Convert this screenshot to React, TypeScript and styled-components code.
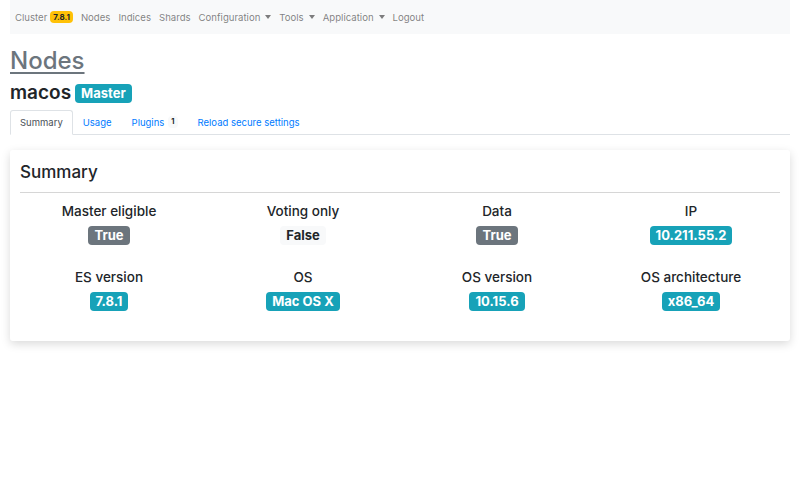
import React from 'react';
import styled, { createGlobalStyle } from 'styled-components';

const GlobalStyle = createGlobalStyle`
  body {
    margin: 0;
    background: #fff;
    font-family: Inter, "Noto Sans", "DejaVu Sans", sans-serif;
    color: #212529;
  }
  *, *::before, *::after {
    box-sizing: border-box;
  }
`;

const Page = styled.div`
  padding: 0 10px 40px;
`;

const Navbar = styled.nav`
  display: flex;
  align-items: center;
  height: 34px;
  padding: 0 1px;
  background: #f8f9fa;
  font-size: 9.6px;
`;

const NavItem = styled.a`
  display: flex;
  align-items: center;
  padding: 0 4px;
  color: rgba(0, 0, 0, 0.5);
  text-decoration: none;
`;

const Caret = styled.span`
  display: inline-block;
  margin-left: 5px;
  border-top: 4px solid rgba(0, 0, 0, 0.5);
  border-left: 3.5px solid transparent;
  border-right: 3.5px solid transparent;
`;

const Badge = styled.span<{ $variant: 'warning' | 'info' | 'secondary' | 'light' }>`
  display: inline-block;
  padding: 0.25em 0.4em;
  font-weight: 700;
  line-height: 1;
  border-radius: 0.25rem;
  white-space: nowrap;
  background: ${(p) =>
    p.$variant === 'warning'
      ? '#ffc107'
      : p.$variant === 'info'
      ? '#17a2b8'
      : p.$variant === 'secondary'
      ? '#6c757d'
      : '#f8f9fa'};
  color: ${(p) => (p.$variant === 'warning' || p.$variant === 'light' ? '#212529' : '#fff')};
`;

const NavBadge = styled(Badge)`
  font-size: 8px;
  padding: 2px 3px;
  margin-left: 3px;
`;

const Title = styled.h1`
  margin: 13px 0 6px;
  font-size: 24px;
  font-weight: 500;
  line-height: 1.2;
  a {
    color: #6c757d;
    text-decoration: underline;
    text-decoration-thickness: 2px;
    text-underline-offset: 3px;
  }
`;

const NodeName = styled.h3`
  display: flex;
  align-items: center;
  gap: 4px;
  margin: 0 0 5px;
  font-size: 19px;
  font-weight: 600;
  line-height: 1.2;
`;

const NameBadge = styled(Badge)`
  font-size: 13px;
  padding: 3px 6px;
`;

const Tabs = styled.ul`
  display: flex;
  margin: 0;
  padding: 0;
  list-style: none;
  border-bottom: 1px solid #dee2e6;
  font-size: 9.5px;
`;

const Tab = styled.li<{ $active?: boolean }>`
  display: flex;
  align-items: center;
  height: 25px;
  padding: 0 9px;
  margin-bottom: -1px;
  border: 1px solid ${(p) => (p.$active ? '#dee2e6' : 'transparent')};
  border-bottom-color: ${(p) => (p.$active ? '#fff' : 'transparent')};
  border-radius: 3px 3px 0 0;
  background: ${(p) => (p.$active ? '#fff' : 'transparent')};
  color: ${(p) => (p.$active ? '#495057' : '#007bff')};
`;

const TabBadge = styled(Badge)`
  font-size: 7.5px;
  padding: 2px 3px;
  margin-left: 4px;
`;

const Card = styled.section`
  margin-top: 15px;
  padding: 10px 10px 30px;
  background: #fff;
  border-radius: 3px;
  box-shadow: 0 3px 10px rgba(0, 0, 0, 0.15);
`;

const CardTitle = styled.h4`
  margin: 0;
  padding: 2px 0 0;
  font-size: 17px;
  font-weight: 500;
  line-height: 1.2;
`;

const Rule = styled.hr`
  margin: 10px 0 10px;
  border: 0;
  border-top: 1px solid #d6d6d6;
`;

const Grid = styled.div`
  display: grid;
  grid-template-columns: repeat(4, 1fr);
  row-gap: 24px;
  margin: 0 -8px;
`;

const Cell = styled.div`
  display: flex;
  flex-direction: column;
  align-items: center;
  gap: 7px;
`;

const Label = styled.div`
  font-size: 13.5px;
  font-weight: 500;
  line-height: 1.2;
`;

const Value = styled(Badge)`
  display: inline-flex;
  align-items: center;
  font-size: 13px;
  padding: 0 6px;
  height: 19px;
`;

type Variant = 'info' | 'secondary' | 'light';

const facts: { label: string; value: string; variant: Variant }[] = [
  { label: 'Master eligible', value: 'True', variant: 'secondary' },
  { label: 'Voting only', value: 'False', variant: 'light' },
  { label: 'Data', value: 'True', variant: 'secondary' },
  { label: 'IP', value: '10.211.55.2', variant: 'info' },
  { label: 'ES version', value: '7.8.1', variant: 'info' },
  { label: 'OS', value: 'Mac OS X', variant: 'info' },
  { label: 'OS version', value: '10.15.6', variant: 'info' },
  { label: 'OS architecture', value: 'x86_64', variant: 'info' },
];

export default function App() {
  return (
    <>
      <GlobalStyle />
      <Page>
        <Navbar>
          <NavItem>
            Cluster <NavBadge $variant="warning">7.8.1</NavBadge>
          </NavItem>
          <NavItem>Nodes</NavItem>
          <NavItem>Indices</NavItem>
          <NavItem>Shards</NavItem>
          <NavItem>
            Configuration <Caret />
          </NavItem>
          <NavItem>
            Tools <Caret />
          </NavItem>
          <NavItem>
            Application <Caret />
          </NavItem>
          <NavItem>Logout</NavItem>
        </Navbar>

        <Title>
          <a href="#nodes">Nodes</a>
        </Title>
        <NodeName>
          macos <NameBadge $variant="info">Master</NameBadge>
        </NodeName>

        <Tabs>
          <Tab $active>Summary</Tab>
          <Tab>Usage</Tab>
          <Tab>
            Plugins <TabBadge $variant="light">1</TabBadge>
          </Tab>
          <Tab>Reload secure settings</Tab>
        </Tabs>

        <Card>
          <CardTitle>Summary</CardTitle>
          <Rule />
          <Grid>
            {facts.map((f) => (
              <Cell key={f.label}>
                <Label>{f.label}</Label>
                <Value $variant={f.variant}>{f.value}</Value>
              </Cell>
            ))}
          </Grid>
        </Card>
      </Page>
    </>
  );
}
